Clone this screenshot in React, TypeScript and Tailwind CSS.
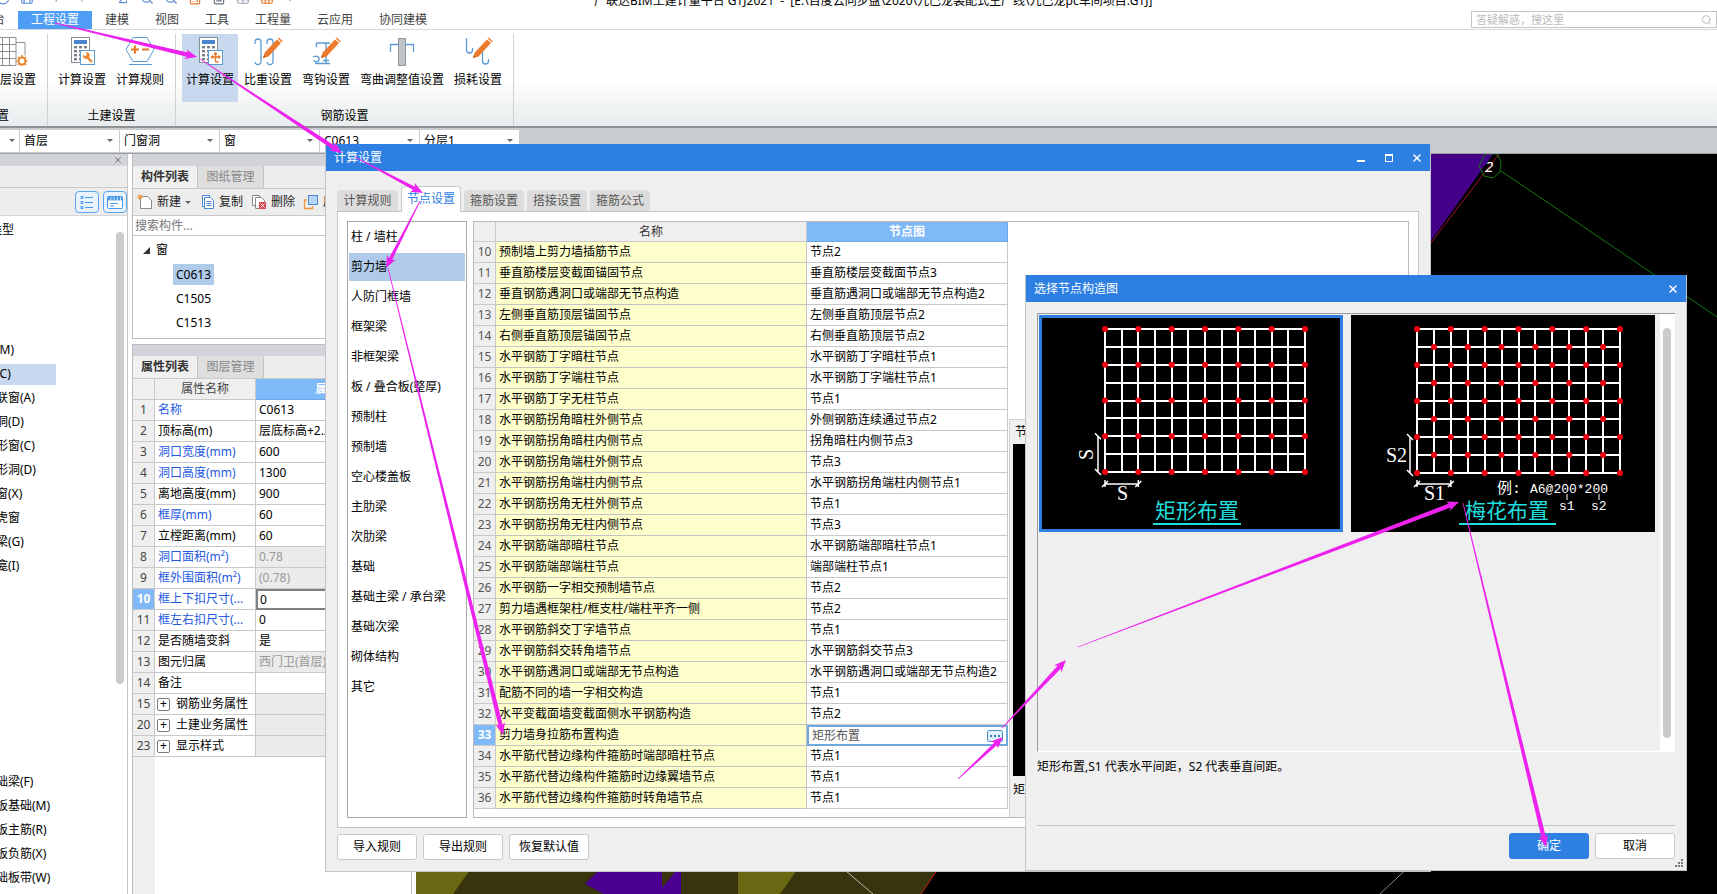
import type { ReactNode } from 'react';
import { Calculator, ChevronDown, Circle, FileText, Grid3x3, Redo, Save, Search, Sigma, Table, Undo, X, ZoomIn } from 'lucide-react';

const NODE_ROWS: [string, string][] = [
  ['预制墙上剪力墙插筋节点', '节点2'],
  ['垂直筋楼层变截面锚固节点', '垂直筋楼层变截面节点3'],
  ['垂直钢筋遇洞口或端部无节点构造', '垂直筋遇洞口或端部无节点构造2'],
  ['左侧垂直筋顶层锚固节点', '左侧垂直筋顶层节点2'],
  ['右侧垂直筋顶层锚固节点', '右侧垂直筋顶层节点2'],
  ['水平钢筋丁字暗柱节点', '水平钢筋丁字暗柱节点1'],
  ['水平钢筋丁字端柱节点', '水平钢筋丁字端柱节点1'],
  ['水平钢筋丁字无柱节点', '节点1'],
  ['水平钢筋拐角暗柱外侧节点', '外侧钢筋连续通过节点2'],
  ['水平钢筋拐角暗柱内侧节点', '拐角暗柱内侧节点3'],
  ['水平钢筋拐角端柱外侧节点', '节点3'],
  ['水平钢筋拐角端柱内侧节点', '水平钢筋拐角端柱内侧节点1'],
  ['水平钢筋拐角无柱外侧节点', '节点1'],
  ['水平钢筋拐角无柱内侧节点', '节点3'],
  ['水平钢筋端部暗柱节点', '水平钢筋端部暗柱节点1'],
  ['水平钢筋端部端柱节点', '端部端柱节点1'],
  ['水平钢筋一字相交预制墙节点', '节点2'],
  ['剪力墙遇框架柱/框支柱/端柱平齐一侧', '节点2'],
  ['水平钢筋斜交丁字墙节点', '节点1'],
  ['水平钢筋斜交转角墙节点', '水平钢筋斜交节点3'],
  ['水平钢筋遇洞口或端部无节点构造', '水平钢筋遇洞口或端部无节点构造2'],
  ['配筋不同的墙一字相交构造', '节点1'],
  ['水平变截面墙变截面侧水平钢筋构造', '节点2'],
  ['剪力墙身拉筋布置构造', '矩形布置'],
  ['水平筋代替边缘构件箍筋时端部暗柱节点', '节点1'],
  ['水平筋代替边缘构件箍筋时边缘翼墙节点', '节点1'],
  ['水平筋代替边缘构件箍筋时转角墙节点', '节点1'],
];

const CATEGORIES = [
  '柱 / 墙柱', '剪力墙', '人防门框墙', '框架梁', '非框架梁', '板 / 叠合板(整厚)', '预制柱', '预制墙',
  '空心楼盖板', '主肋梁', '次肋梁', '基础', '基础主梁 / 承台梁', '基础次梁', '砌体结构', '其它',
];

interface Property {
  no: number;
  name: string;
  value?: string;
  blue?: boolean;
  gray?: boolean;
  group?: boolean;
}

const PROPERTIES: Property[] = [
  { no: 1, name: '名称', value: 'C0613', blue: true },
  { no: 2, name: '顶标高(m)', value: '层底标高+2.2' },
  { no: 3, name: '洞口宽度(mm)', value: '600', blue: true },
  { no: 4, name: '洞口高度(mm)', value: '1300', blue: true },
  { no: 5, name: '离地高度(mm)', value: '900' },
  { no: 6, name: '框厚(mm)', value: '60', blue: true },
  { no: 7, name: '立樘距离(mm)', value: '60' },
  { no: 8, name: '洞口面积(m²)', value: '0.78', blue: true, gray: true },
  { no: 9, name: '框外围面积(m²)', value: '(0.78)', blue: true, gray: true },
  { no: 10, name: '框上下扣尺寸(...', value: '0', blue: true },
  { no: 11, name: '框左右扣尺寸(...', value: '0', blue: true },
  { no: 12, name: '是否随墙变斜', value: '是' },
  { no: 13, name: '图元归属', value: '西门卫(首层)', gray: true },
  { no: 14, name: '备注', value: '' },
  { no: 15, name: '钢筋业务属性', group: true, gray: true },
  { no: 20, name: '土建业务属性', group: true, gray: true },
  { no: 23, name: '显示样式', group: true, gray: true },
];

// one entry per 24px line of the navigation tree, '' for lines without a caption
const NAV_ITEMS = [
  '', '', '', '', '门(M)', '窗(C)', '门联窗(A)', '墙洞(D)', '带形窗(C)', '带形洞(D)', '飘窗(X)', '老虎窗',
  '过梁(G)', '壁龛(I)', '', '', '', '', '', '', '', '', '基础梁(F)', '筏板基础(M)', '筏板主筋(R)', '筏板负筋(X)', '基础板带(W)',
];

const ARROWS = [
  [55, 23, 197, 57],
  [200, 59, 342, 153],
  [355, 157, 423, 193],
  [420, 201, 386, 268],
  [388, 268, 503, 735],
  [958, 779, 1003, 737],
  [1002, 728, 1066, 660],
  [1078, 647, 1459, 502],
  [1463, 503, 1546, 847],
];

function Arrow({ line }: { line: number[] }) {
  const [x1, y1, x2, y2] = line;
  const len = Math.hypot(x2 - x1, y2 - y1);
  const angle = (Math.atan2(y2 - y1, x2 - x1) * 180) / Math.PI;
  const w = len > 90 ? 2.2 : 1.8;
  const neck = len - 10;
  return (
    <polygon
      transform={`translate(${x1} ${y1}) rotate(${angle})`}
      points={`0,-0.4 ${neck},${-w} ${neck - 2},-5 ${len},0 ${neck - 2},5 ${neck},${w} 0,0.4`}
    />
  );
}

function CalcIcon({ children }: { children: ReactNode }) {
  return (
    <svg width="28" height="30" viewBox="0 0 28 30" fill="none">
      <rect x="3.5" y="1.5" width="18" height="25" fill="#fff" stroke="#8a8f96" />
      <rect x="6" y="4" width="13" height="4" fill="#4a86cf" />
      {[10, 14, 18, 22].map(y => [6, 11, 16].map(x => <rect key={`${x}-${y}`} x={x} y={y} width="3" height="2.4" fill="#7b8087" />))}
      <rect x="12.5" y="14.5" width="14" height="14" fill="#fff" stroke="#5b9bd5" />
      {children}
    </svg>
  );
}

function WrenchCalcIcon() {
  return (
    <CalcIcon>
      <path d="M24 26l-4.500-4.500" stroke="#e8872f" strokeWidth="2.400" />
      <path d="M17.500 16.600a3.200 3.200 0 0 1 4 4.400l-2 1.500a3.200 3.200 0 0 1-4.400-4l2.200 1.700 1.800-1.600z" fill="#e8872f" />
    </CalcIcon>
  );
}

function MoveCalcIcon() {
  return (
    <CalcIcon>
      <path d="M19.500 17v9M15.500 21h8M18 18.500l1.500-1.800 1.500 1.800M22.300 19.500l1.700 1.500-1.700 1.500M17 19.500L15.300 21l1.700 1.500M19.500 26h3" stroke="#e8782a" strokeWidth="1.300" />
    </CalcIcon>
  );
}

function RuleIcon() {
  return (
    <svg width="30" height="30" viewBox="0 0 30 30" fill="none">
      <path d="M8 1.500h14l7 12-7 12H8l-7-12z" fill="#fff" stroke="#5b9bd5" />
      <path d="M6 13.500h8M10 9.500v8M17 13.500h7" stroke="#e8782a" strokeWidth="2.200" />
      <path d="M4 28.500h23" stroke="#5b9bd5" />
    </svg>
  );
}

function Pencil() {
  return (
    <g>
      <path d="M10 22l1.800-5.500L24 3.500l4 3.600L15.500 20.400z" fill="#ec7a2c" />
      <path d="M24.800 2.600l1-1 4 3.600-1 1z" fill="#ec7a2c" />
      <path d="M10 22l1-3 1.900 1.800z" fill="#c25a18" />
    </g>
  );
}

function WeightIcon() {
  return (
    <svg width="30" height="30" viewBox="0 0 30 30" fill="none">
      <path d="M2 8V6a3 3 0 0 1 6 0v19a3 3 0 0 1-6 1M14 8V6a3 3 0 0 1 6 0v19a3 3 0 0 1-6 1" stroke="#5b9bd5" strokeWidth="1.300" />
      <Pencil />
    </svg>
  );
}

function HookIcon() {
  return (
    <svg width="30" height="30" viewBox="0 0 30 30" fill="none">
      <path d="M6 11a3 3 0 0 1 0-4h13M15 7v20M2 21c3-2 7 0 6 3s-5 2-5 0M4 27.500h15M12 24.500h6" stroke="#5b9bd5" strokeWidth="1.300" />
      <Pencil />
    </svg>
  );
}

function BendIcon() {
  return (
    <svg width="30" height="30" viewBox="0 0 30 30" fill="none">
      <path d="M3.500 16V8.500h23V16" stroke="#5b9bd5" strokeWidth="1.300" />
      <rect x="11.500" y="2.500" width="7" height="27" fill="#bfc4c8" stroke="#8d959c" />
    </svg>
  );
}

function LossIcon() {
  return (
    <svg width="30" height="30" viewBox="0 0 30 30" fill="none">
      <path d="M3.500 2v12a3 3 0 0 0 6 0v-2M19.500 14v11a3 3 0 0 0 6 0v-2" stroke="#5b9bd5" strokeWidth="1.300" />
      <Pencil />
    </svg>
  );
}

function FloorIcon() {
  return (
    <svg width="40" height="30" viewBox="0 0 40 30" fill="none">
      <path d="M6 1.500h22v28H6zM6 8.500h22M6 15.500h22M6 22.500h22M14.500 1v28M21.500 1v28" fill="#fff" stroke="#8a8f96" />
      <path d="M28 6.500h9v13" stroke="#8a8f96" />
      <circle cx="34" cy="25" r="3.500" fill="#fff" stroke="#e8872f" strokeWidth="2" />
      <path d="M34 19v3M34 28v2M28.500 25h2M37.500 25h2M30 21l1.500 1.500M38 21l-1.500 1.500M30 29l1.500-1.500M38 29l-1.500-1.500" stroke="#e8872f" strokeWidth="1.500" />
    </svg>
  );
}

function RibbonButton({ icon, label, active, wide }: { icon: ReactNode; label: string; active?: boolean; wide?: boolean }) {
  return (
    <button className={`flex h-[68px] shrink-0 flex-col items-center whitespace-nowrap pt-0.5 ${wide ? 'w-[92px]' : 'w-14'} ${active ? 'bg-[#c8d8ee]' : ''}`}>
      {icon}
      <span className="mt-1 leading-5">{label}</span>
    </button>
  );
}

function TitleBar() {
  return (
    <header className="flex h-[11px] items-end overflow-hidden bg-white">
      <div className="mb-1.5 flex w-[594px] shrink-0 items-end gap-[10px] text-[#5b8fd0]">
        <Circle className="-ml-1 size-3.5" />
        <Save className="size-3.5" />
        <Undo className="size-3.5" />
        <Redo className="ml-3 mr-3 size-3.5 text-gray-400" />
        <Sigma className="size-3.5" />
        <ZoomIn className="size-3.5" />
        <Search className="size-3.5" />
        <Calculator className="size-3.5 text-[#e8782a]" />
        <FileText className="size-3.5 text-gray-500" />
        <Table className="size-3.5 text-gray-400" />
        <Grid3x3 className="size-3.5 text-[#e8782a]" />
        <ChevronDown className="size-3 text-gray-500" />
      </div>
      <h1 className="mb-0.5 whitespace-pre leading-4">{'广联达BIM土建计量平台 GTJ2021  -  [E:\\百度云同步盘\\2020\\九巴龙装配式生产线\\九巴龙pc车间项目.GTJ]'}</h1>
    </header>
  );
}

function RibbonTabs() {
  return (
    <nav className="flex h-[19px] items-stretch border-b border-[#d8d8d8] bg-white leading-[18px] text-[#444]">
      <a href="#start" className="w-[18px] overflow-hidden"><span className="-ml-[7px]">台</span></a>
      <a href="#project" className="w-[74px] bg-[#4f9df5] text-center text-white">工程设置</a>
      <a href="#model" className="w-[50px] text-center">建模</a>
      <a href="#view" className="w-[50px] text-center">视图</a>
      <a href="#tools" className="w-[50px] text-center">工具</a>
      <a href="#quantity" className="w-[62px] text-center">工程量</a>
      <a href="#cloud" className="w-[62px] text-center">云应用</a>
      <a href="#team" className="w-[74px] text-center">协同建模</a>
      <label className="ml-auto flex h-[17px] w-[246px] items-center border border-[#c4c4c4] pl-1 pr-1">
        <input aria-label="搜索" placeholder="答疑解惑，搜这里" className="w-full bg-transparent text-[11px] leading-4 outline-none placeholder:text-[#bbb]" />
        <Search className="size-3 text-[#bbb]" />
      </label>
    </nav>
  );
}

function Ribbon() {
  return (
    <section className="flex h-[98px] border-b-2 border-[#8f9194] bg-linear-to-b from-white from-50% to-[#e8ecec] pt-1">
      <div className="flex w-12 flex-col justify-between overflow-hidden border-r border-[#cfd2d4]">
        <button className="-ml-3 flex w-[60px] flex-col items-start pt-0.5">
          <FloorIcon />
          <span className="mt-1 leading-5">楼层设置</span>
        </button>
        <span className="-ml-[39px] whitespace-nowrap leading-5">工程设置</span>
      </div>
      <div className="flex w-32 flex-col justify-between border-r border-[#cfd2d4]">
        <div className="flex gap-0.5 pl-[6px]">
          <RibbonButton icon={<WrenchCalcIcon />} label="计算设置" />
          <RibbonButton icon={<RuleIcon />} label="计算规则" />
        </div>
        <span className="text-center leading-5">土建设置</span>
      </div>
      <div className="flex w-[338px] flex-col justify-between border-r border-[#cfd2d4]">
        <div className="flex gap-0.5 pl-[6px]">
          <RibbonButton icon={<MoveCalcIcon />} label="计算设置" active />
          <RibbonButton icon={<WeightIcon />} label="比重设置" />
          <RibbonButton icon={<HookIcon />} label="弯钩设置" />
          <RibbonButton icon={<BendIcon />} label="弯曲调整值设置" wide />
          <RibbonButton icon={<LossIcon />} label="损耗设置" />
        </div>
        <span className="text-center leading-5">钢筋设置</span>
      </div>
    </section>
  );
}

function Caret() {
  return <span className="border-x-[3px] border-t-[3px] border-x-transparent border-t-[#666]" />;
}

function FilterBar() {
  return (
    <section className="flex h-[26px] items-center border-b border-[#9a9da1] bg-[#c9cdd2]">
      <div className="flex h-[22px] w-[19px] items-center justify-end bg-white pr-1"><Caret /></div>
      {['首层', '门窗洞', '窗', 'C0613', '分层1'].map(v => (
        <div key={v} className="relative ml-px flex h-[22px] w-[99px] items-center bg-white">
          <select aria-label={v} className="h-full w-full appearance-none px-1 outline-none">
            <option>{v}</option>
          </select>
          <span className="pointer-events-none absolute right-1.5 flex"><Caret /></span>
        </div>
      ))}
    </section>
  );
}

function NavPanel() {
  return (
    <aside className="flex w-32 shrink-0 flex-col border-r border-[#c4c7ca] bg-white">
      <div className="flex h-3 items-center justify-end bg-[#d2d4d9] pr-1">
        <button aria-label="关闭"><X className="size-2.5 text-[#666]" /></button>
      </div>
      <div className="h-[22px] border-b border-[#c9c9c9] bg-[#ededed]" />
      <div className="flex h-7 items-center justify-end gap-1 border-b border-[#d5d5d5] bg-[#ededed]">
        <button aria-label="列表" className="flex h-[22px] w-6 items-center justify-center rounded-sm border border-[#5aa5ee] bg-[#e9f3fd]">
          <svg width="14" height="14" viewBox="0 0 14 14" stroke="#4a98e8" fill="none">
            <path d="M5 2.500h8M5 7.500h8M5 12.500h8M1 1.500h2v2H1zM1 6.500h2v2H1zM1 11.500h2v2H1z" />
          </svg>
        </button>
        <button aria-label="窗口" className="flex h-[22px] w-6 items-center justify-center rounded-sm border border-[#5aa5ee] bg-[#e9f3fd]">
          <svg width="16" height="14" viewBox="0 0 16 14" fill="none">
            <rect x="0.500" y="1.500" width="15" height="12" rx="1" fill="#fff" stroke="#4a98e8" />
            <path d="M1 3.500h14" stroke="#4a98e8" strokeWidth="4" strokeDasharray="2.500 0.700" />
            <path d="M3 8.500h8M3 11h4" stroke="#4a98e8" />
          </svg>
        </button>
      </div>
      <div className="relative flex-1 overflow-hidden pt-0.5">
        <div className="-ml-[10px] leading-6">类型</div>
        {NAV_ITEMS.map((item, i) => (
          <div key={i} className="flex h-6 items-center">
            <span className={`h-[21px] whitespace-nowrap leading-5 ${item === '窗(C)' ? 'w-14 bg-[#c8d8ee]' : ''}`}>
              <span className="-ml-4">{item}</span>
            </span>
          </div>
        ))}
        <div className="absolute right-[3px] top-4 h-[452px] w-2 rounded bg-[#cbcbcb]" />
      </div>
    </aside>
  );
}

function PanelTabs({ names }: { names: string[] }) {
  return (
    <div className="flex h-[23px] border-b border-[#c9c9c9] bg-[#ededed] leading-[22px]">
      <button className="w-[65px] border-r border-[#c4c4c4] bg-[#f0f0f0] font-bold text-[#333]">{names[0]}</button>
      <button className="w-[66px] border-r border-[#c4c4c4] bg-[#dedede] text-[#888]">{names[1]}</button>
    </div>
  );
}

function ComponentPanel() {
  return (
    <aside className="flex w-72 shrink-0 flex-col bg-white px-1">
      <div className="h-[185px] border border-t-0 border-[#b9bcc0]">
        <div className="h-3 bg-[#d2d4d9]" />
        <PanelTabs names={['构件列表', '图纸管理']} />
        <div className="flex h-[27px] items-center overflow-hidden whitespace-nowrap border-b border-[#c9c9c9] bg-[#ededed] pl-1 text-[#222]">
          <button className="flex items-center">
            <svg width="16" height="16" viewBox="0 0 16 16" fill="none">
              <path d="M3.500 2.500h7l4 4v8h-11z" fill="#fff" stroke="#888" />
              <path d="M3 0v6M0 3h6M1 1l4 4M5 1L1 5" stroke="#f0963c" />
            </svg>
            <span className="mx-1">新建</span>
            <span className="flex"><Caret /></span>
          </button>
          <button className="ml-2.5 flex items-center">
            <svg width="14" height="16" viewBox="0 0 14 16" fill="none" stroke="#4a86cf">
              <path d="M1.500 1.500h7v11h-7z" fill="#fff" />
              <path d="M3.500 3.500h6l3 3v8h-9z" fill="#fff" />
              <path d="M5.500 7.500h5M5.500 9.500h5M5.500 11.500h5" />
            </svg>
            <span className="ml-1">复制</span>
          </button>
          <button className="ml-2 flex items-center">
            <svg width="16" height="16" viewBox="0 0 16 16" fill="none" stroke="#888">
              <path d="M1.500 1.500h7v10h-7z" fill="#fff" />
              <path d="M4.500 3.500h6l3 3v8h-9z" fill="#fff" />
              <rect x="8" y="8" width="7" height="7" fill="#d9484f" stroke="none" />
              <path d="M9.500 9.500l4 4M13.500 9.500l-4 4" stroke="#fff" />
            </svg>
            <span className="ml-1">删除</span>
          </button>
          <button className="ml-2 flex items-center">
            <svg width="16" height="16" viewBox="0 0 16 16" fill="none">
              <path d="M4 6H1.500v8.500h8V12" stroke="#f0963c" strokeWidth="1.300" />
              <rect x="5.500" y="1.500" width="9" height="9" fill="#b5d6f8" stroke="#4a86cf" />
            </svg>
            <span className="ml-1">层间复制</span>
          </button>
        </div>
        <input aria-label="搜索构件" placeholder="搜索构件..." className="block h-5 w-full border-b border-[#c9c9c9] px-0.5 outline-none placeholder:text-[#777]" />
        <div className="pt-0.5 leading-6">
          <div className="flex items-center pl-[10px]">
            <svg width="7" height="7" viewBox="0 0 7 7"><path d="M7 0v7H0z" fill="#333" /></svg>
            <span className="ml-1.5">窗</span>
          </div>
          {['C0613', 'C1505', 'C1513'].map((c, i) => (
            <div key={c} className="flex h-6 items-center pl-10">
              <span className={`px-[3px] leading-[21px] ${i === 0 ? 'bg-[#b0cbea]' : ''}`}>{c}</span>
            </div>
          ))}
        </div>
      </div>
      <div className="mt-[5px] flex flex-1 flex-col overflow-hidden border-x border-t border-[#b9bcc0]">
        <div className="h-[11px] shrink-0 bg-[#d2d4d9]" />
        <PanelTabs names={['属性列表', '图层管理']} />
        <table className="w-full table-fixed border-separate border-spacing-0 leading-5">
          <thead>
            <tr>
              <th className="w-[22px] border-b border-r border-[#c9c9c9] bg-[#efefef]" />
              <th className="w-[101px] border-b border-r border-[#c9c9c9] bg-[#efefef] font-normal text-[#444]">属性名称</th>
              <th className="border-b border-[#6aa9ea] bg-[#80b9f7] text-white">属性值</th>
            </tr>
          </thead>
          <tbody>
            {PROPERTIES.map(p => (
              <tr key={p.no}>
                <td className={`border-b border-r border-[#c9c9c9] text-center ${p.no === 10 ? 'bg-[#80b9f7] font-bold text-white' : 'bg-[#efefef] text-[#444]'}`}>{p.no}</td>
                <td className={`overflow-hidden whitespace-nowrap border-b border-r border-[#c9c9c9] ${p.group ? 'pl-0.5' : 'pl-[3px]'} ${p.blue ? 'text-[#2459e0]' : ''}`}>
                  {p.group && <button aria-label="展开" className="mr-1.5 inline-flex size-[13px] items-center justify-center rounded-[2px] border border-[#777] leading-none">+</button>}
                  {p.name}
                </td>
                {p.no === 10 ? (
                  <td className="border-2 border-[#808080] pl-0.5 leading-[17px]">{p.value}</td>
                ) : (
                  <td className={`border-b border-[#c9c9c9] pl-[3px] ${p.gray ? 'bg-[#ebebeb] text-[#999]' : ''}`}>{p.value}</td>
                )}
              </tr>
            ))}
          </tbody>
        </table>
        <div className="w-[22px] flex-1 bg-[#efefef]" />
      </div>
    </aside>
  );
}

function ModelCanvas() {
  return (
    <main className="min-w-0 flex-1 overflow-hidden bg-black">
      <svg className="h-full w-full" fill="none">
        <g transform="translate(-416 -154)">
          <path d="M416 860h528l-23 34H416z" fill="#38340e" />
          <path d="M416 860h61l-24 34h-37zM738 860h66l-24 34h-42z" fill="#6b6814" />
          <path d="M585 884l12-12V860h84v34h-77z" fill="#4b0093" />
          <path d="M662 872h13l-13 16z" fill="#38340e" />
          <path d="M944 860l-23 34" stroke="#d01818" />
          <path d="M833 860l40 34" stroke="#b9b9a8" />
          <path d="M1416 860l-36 34" stroke="#8a8a8a" />
          <path d="M1400 154h93l-63 88h-30z" fill="#45008a" />
          <path d="M1499 154l-69 90" stroke="#a01030" />
          <path d="M1485 154l-6 12 5 10 9 2 7-6 1-10-4-8zM1501 171l216 146" stroke="#0f7a12" />
          <text x="1485" y="172" fill="#fff" fontSize="15" fontStyle="italic">2</text>
        </g>
      </svg>
    </main>
  );
}

function DialogButton({ children, primary }: { children: ReactNode; primary?: boolean }) {
  return (
    <button className={`h-[26px] w-20 rounded-[3px] border ${primary ? 'border-[#2d80e2] bg-[#2d80e2] text-white' : 'border-[#c9c9c9] bg-white'}`}>
      {children}
    </button>
  );
}

function CalcSettingsDialog() {
  return (
    <section role="dialog" aria-label="计算设置" className="absolute left-[325px] top-[144px] flex h-[728px] w-[1106px] flex-col border border-t-0 border-[#c0c4c8] bg-[#efefef]">
      <div className="flex h-[27px] shrink-0 items-center bg-[#2d80e2] pl-2 pr-[7px] text-white">
        <h2>计算设置</h2>
        <button aria-label="最小化" className="ml-auto mt-1.5 h-0.5 w-2 bg-white" />
        <button aria-label="最大化" className="ml-5 h-2 w-2 border border-t-2 border-white" />
        <button aria-label="关闭" className="ml-[18px]"><X className="size-3" strokeWidth={3} /></button>
      </div>
      <div role="tablist" className="mt-[15px] flex items-end gap-[3px] pl-[11px] leading-[21px] text-[#555]">
        <button role="tab" className="w-[61px] rounded-t bg-[#dcdcdc]">计算规则</button>
        <button role="tab" className="relative -mb-px w-[60px] rounded-t border border-b-0 border-[#c9c9c9] bg-white pb-px leading-6 text-[#2d80e2]">节点设置</button>
        <button role="tab" className="w-[60px] rounded-t bg-[#dcdcdc]">箍筋设置</button>
        <button role="tab" className="w-[60px] rounded-t bg-[#dcdcdc]">搭接设置</button>
        <button role="tab" className="w-[60px] rounded-t bg-[#dcdcdc]">箍筋公式</button>
      </div>
      <div className="mx-[11px] flex min-h-0 flex-1 gap-[6px] border border-[#c4c4c4] bg-white p-[9px]">
        <ul className="w-[120px] shrink-0 border border-[#a9a9a9] px-px">
          {CATEGORIES.map(c => (
            <li key={c} className="h-[30px] py-px">
              <a href="#category" className={`block whitespace-nowrap pl-0.5 leading-7 ${c === '剪力墙' ? 'bg-[#b0cbea]' : ''}`}>{c}</a>
            </li>
          ))}
        </ul>
        <div className="flex flex-1 items-start border border-[#b9b9b9]">
          <table className="table-fixed border-separate border-spacing-0 leading-5">
            <thead>
              <tr className="leading-[19px]">
                <th className="w-[22px] border-b border-r border-[#c9c9c9] bg-[#efefef]" />
                <th className="w-[311px] border-b border-r border-[#c9c9c9] bg-[#efefef] font-normal text-[#333]">名称</th>
                <th className="w-[201px] border-b border-r border-[#6aa9ea] bg-[#80b9f7] text-white">节点图</th>
              </tr>
            </thead>
            <tbody>
              {NODE_ROWS.map(([name, node], i) => {
                const no = i + 10;
                return (
                  <tr key={no}>
                    <td className={`border-b border-r border-[#c9c9c9] text-center ${no === 33 ? 'bg-[#80b9f7] font-bold text-white' : 'bg-[#efefef] text-[#555]'}`}>{no}</td>
                    <td className="whitespace-nowrap border-b border-r border-[#c4c4c4] bg-[#ffffcc] pl-[3px]">{name}</td>
                    {no === 33 ? (
                      <td className="border-2 border-[#6fa8dc] pl-[3px] leading-[17px] text-[#555]">
                        <div className="flex items-center justify-between pr-[3px]">
                          {node}
                          <button aria-label="选择" className="flex h-3 w-4 items-center justify-center gap-0.5 rounded-[2px] border border-[#4a98c8] bg-[#e3f1fc]">
                            <i className="size-0.5 bg-[#3a80c0]" />
                            <i className="size-0.5 bg-[#3a80c0]" />
                            <i className="size-0.5 bg-[#3a80c0]" />
                          </button>
                        </div>
                      </td>
                    ) : (
                      <td className="whitespace-nowrap border-b border-r border-[#c9c9c9] pl-[3px]">{node}</td>
                    )}
                  </tr>
                );
              })}
            </tbody>
          </table>
          <div className="ml-px flex h-[398px] flex-1 flex-col self-end border-l border-t border-[#d0d0d0] bg-[#f0f0f0] pb-[13px] pl-[3px]">
            <span className="pl-0.5 leading-6">节点详图</span>
            <div className="flex-1 bg-black" />
            <span className="leading-7">矩形布置</span>
          </div>
        </div>
      </div>
      <div className="flex gap-[6px] px-[11px] pb-[11px] pt-[6px]">
        <DialogButton>导入规则</DialogButton>
        <DialogButton>导出规则</DialogButton>
        <DialogButton>恢复默认值</DialogButton>
      </div>
    </section>
  );
}

interface RebarGridProps {
  width: number;
  height: number;
  staggered?: boolean;
}

function RebarGrid({ width, height, staggered }: RebarGridProps) {
  const x0 = 66;
  const y0 = 14;
  const dx = width / 12;
  const dy = height / 8;
  const cols = Array.from({ length: 13 }, (_, i) => i);
  const rows = Array.from({ length: 9 }, (_, i) => i);
  const hasTie = (c: number, r: number) => (staggered ? (c + r) % 2 === 0 : c % 2 === 0 && r % 2 === 0);
  const bottom = y0 + height;
  return (
    <g>
      <g stroke="#fff" strokeWidth="2" shapeRendering="crispEdges">
        {cols.map(c => <line key={c} x1={x0 + c * dx} x2={x0 + c * dx} y1={y0} y2={bottom} />)}
        {rows.map(r => <line key={r} x1={x0} x2={x0 + width} y1={y0 + r * dy} y2={y0 + r * dy} />)}
      </g>
      {rows.map(r => cols.filter(c => hasTie(c, r)).map(c => <circle key={`${c}-${r}`} cx={x0 + c * dx} cy={y0 + r * dy} r="3" fill="#f00010" />))}
      <path
        d={`M59 ${bottom - 2 * dy}V${bottom}M56 ${bottom - 2 * dy - 3}l6 6M56 ${bottom - 3}l6 6M${x0} 169h${2 * dx}M${x0 - 3} 172l6-6M${x0 + 2 * dx - 3} 172l6-6M${x0} 165v7M${x0 + 2 * dx} 165v7`}
        stroke="#fff"
        strokeWidth="1.500"
      />
    </g>
  );
}

function NodePickerDialog() {
  return (
    <section role="dialog" aria-label="选择节点构造图" className="absolute left-[1025px] top-[275px] flex h-[596px] w-[662px] flex-col border border-t-0 border-[#c0c4c8] bg-[#efefef]">
      <div className="flex h-[27px] items-center justify-between bg-[#2d80e2] pl-2 pr-[7px] text-white">
        <h2>选择节点构造图</h2>
        <button aria-label="关闭"><X className="size-3" strokeWidth={3} /></button>
      </div>
      <div className="mx-[11px] mt-[11px] flex h-[439px] justify-between border-b border-l border-t border-[#9b9b9b] border-b-white">
        <div className="flex gap-2 pl-px pt-px">
          <button aria-label="矩形布置" className="h-[217px] bg-black outline-[3px] -outline-offset-[3px] outline-[#2d80e2]">
            <svg width="304" height="217" fill="none" className="block">
              <RebarGrid width={200} height={143} />
              <g fill="#fff" fontFamily="Liberation Serif, serif" fontSize="20">
                <text transform="translate(54 145) rotate(-90)">S</text>
                <text x="78" y="185">S</text>
              </g>
              <text x="116" y="203" fontSize="21" fill="#20dede">矩形布置</text>
              <path d="M114 209h88" stroke="#20dede" strokeWidth="2" />
            </svg>
          </button>
          <button aria-label="梅花布置" className="h-[217px] bg-black">
            <svg width="304" height="217" fill="none" className="block">
              <RebarGrid width={203} height={144} staggered />
              <g fill="#fff" fontFamily="Liberation Serif, serif" fontSize="20">
                <text x="35" y="147">S2</text>
                <text x="73" y="185">S1</text>
              </g>
              <g fill="#fff" fontFamily="Liberation Mono, Noto Sans CJK SC, monospace" fontSize="13">
                <text x="146" y="178" fontSize="15">例:</text>
                <text x="179" y="178">A6@200*200</text>
                <text x="208" y="195">s1</text>
                <text x="240" y="195">s2</text>
              </g>
              <path d="M216 179v6M248 179v6" stroke="#fff" />
              <text x="114" y="203" fontSize="21" fill="#20dede">梅花布置</text>
              <path d="M108 209h97" stroke="#20dede" strokeWidth="2" />
            </svg>
          </button>
        </div>
        <div className="w-[15px] bg-white px-[3px] pb-[13px] pt-[14px]">
          <div className="h-full w-2 rounded bg-[#cbcbcb]" />
        </div>
      </div>
      <p className="mx-[11px] mt-[3px] leading-6">矩形布置,S1 代表水平间距，S2 代表垂直间距。</p>
      <div className="mx-[11px] mt-auto flex justify-end gap-[6px] border-t border-[#c4c4c4] pb-[11px] pt-[7px]">
        <DialogButton primary>确定</DialogButton>
        <DialogButton>取消</DialogButton>
      </div>
      <svg className="absolute bottom-0.5 right-0.5" width="9" height="9" fill="#777">
        <path d="M6 0h2v2H6zM3 3h2v2H3zM6 3h2v2H6zM0 6h2v2H0zM3 6h2v2H3zM6 6h2v2H6z" />
      </svg>
    </section>
  );
}

export default function App() {
  return (
    <div className="relative flex h-screen flex-col overflow-hidden bg-white font-['Noto_Sans','Noto_Sans_CJK_SC',sans-serif] text-xs text-black">
      <TitleBar />
      <RibbonTabs />
      <Ribbon />
      <FilterBar />
      <div className="flex min-h-0 flex-1">
        <NavPanel />
        <ComponentPanel />
        <ModelCanvas />
      </div>
      <CalcSettingsDialog />
      <NodePickerDialog />
      <svg className="pointer-events-none absolute inset-0 h-full w-full" fill="#ee22ee">
        {ARROWS.map((line, i) => <Arrow key={i} line={line} />)}
      </svg>
    </div>
  );
}
